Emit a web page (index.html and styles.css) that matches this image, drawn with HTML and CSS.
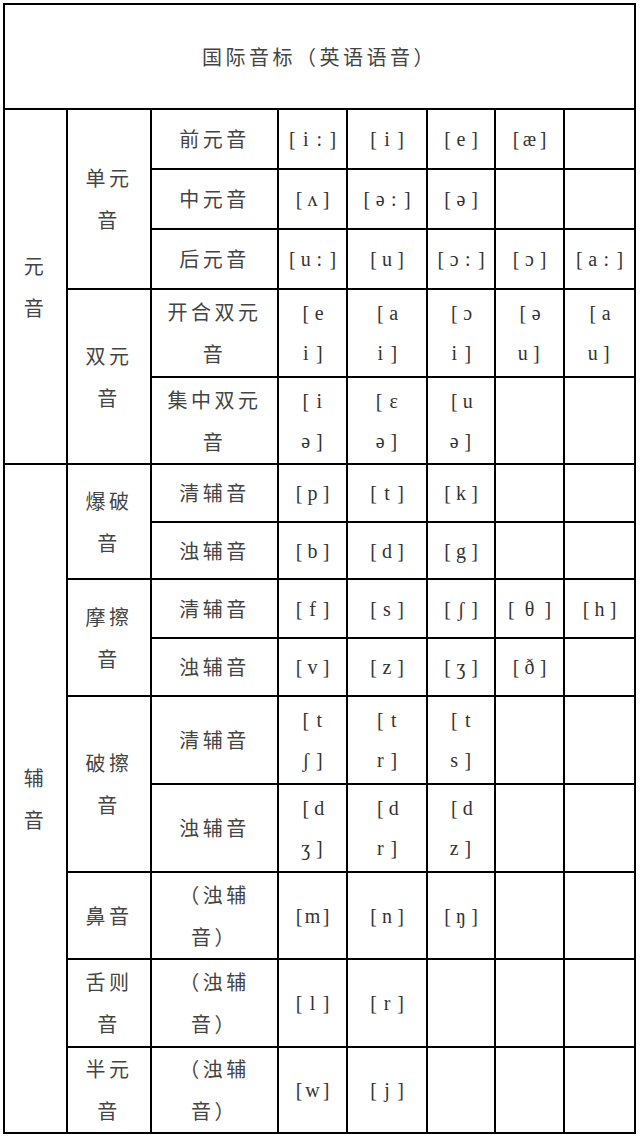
FILE: index.html
```html
<!DOCTYPE html>
<html lang="zh-CN">
<head>
<meta charset="utf-8">
<title>国际音标（英语语音）</title>
<link rel="stylesheet" href="styles.css">
</head>
<body>
<table class="ipa">
  <colgroup>
    <col class="c1"><col class="c2"><col class="c3"><col class="c4"><col class="c5"><col class="c6"><col class="c7"><col class="c8">
  </colgroup>
  <tbody>
    <tr class="r-title"><td colspan="8" class="zh">国际音标（英语语音）</td></tr>

    <tr class="r60">
      <td rowspan="5" class="zh">元<br>音</td>
      <td rowspan="3" class="zh">单元<br>音</td>
      <td class="zh">前元音</td>
      <td class="ph"><span class="g">[</span><span class="g">i</span><span class="g">:</span><span class="g">]</span></td>
      <td class="ph"><span class="g">[</span><span class="g">i</span><span class="g">]</span></td>
      <td class="ph"><span class="g">[</span><span class="g">e</span><span class="g">]</span></td>
      <td class="ph"><span class="g">[</span><span class="g">æ</span><span class="g">]</span></td>
      <td></td>
    </tr>
    <tr class="r60">
      <td class="zh">中元音</td>
      <td class="ph"><span class="g">[</span><span class="g">ʌ</span><span class="g">]</span></td>
      <td class="ph"><span class="g">[</span><span class="g">ə</span><span class="g">:</span><span class="g">]</span></td>
      <td class="ph"><span class="g">[</span><span class="g">ə</span><span class="g">]</span></td>
      <td></td><td></td>
    </tr>
    <tr class="r60">
      <td class="zh">后元音</td>
      <td class="ph"><span class="g">[</span><span class="g">u</span><span class="g">:</span><span class="g">]</span></td>
      <td class="ph"><span class="g">[</span><span class="g">u</span><span class="g">]</span></td>
      <td class="ph"><span class="g">[</span><span class="g">ɔ</span><span class="g">:</span><span class="g">]</span></td>
      <td class="ph"><span class="g">[</span><span class="g">ɔ</span><span class="g">]</span></td>
      <td class="ph"><span class="g">[</span><span class="g">a</span><span class="g">:</span><span class="g">]</span></td>
    </tr>
    <tr class="r88">
      <td rowspan="2" class="zh">双元<br>音</td>
      <td class="zh">开合双元<br>音</td>
      <td class="ph"><span class="g">[</span><span class="g">e</span><br><span class="g">i</span><span class="g">]</span></td>
      <td class="ph"><span class="g">[</span><span class="g">a</span><br><span class="g">i</span><span class="g">]</span></td>
      <td class="ph"><span class="g">[</span><span class="g">ɔ</span><br><span class="g">i</span><span class="g">]</span></td>
      <td class="ph"><span class="g">[</span><span class="g">ə</span><br><span class="g">u</span><span class="g">]</span></td>
      <td class="ph"><span class="g">[</span><span class="g">a</span><br><span class="g">u</span><span class="g">]</span></td>
    </tr>
    <tr class="r87">
      <td class="zh">集中双元<br>音</td>
      <td class="ph"><span class="g">[</span><span class="g">i</span><br><span class="g">ə</span><span class="g">]</span></td>
      <td class="ph"><span class="g">[</span><span class="g w">ε</span><br><span class="g">ə</span><span class="g">]</span></td>
      <td class="ph"><span class="g">[</span><span class="g">u</span><br><span class="g">ə</span><span class="g">]</span></td>
      <td></td><td></td>
    </tr>

    <tr class="r58">
      <td rowspan="9" class="zh">辅<br>音</td>
      <td rowspan="2" class="zh">爆破<br>音</td>
      <td class="zh">清辅音</td>
      <td class="ph"><span class="g">[</span><span class="g">p</span><span class="g">]</span></td>
      <td class="ph"><span class="g">[</span><span class="g">t</span><span class="g">]</span></td>
      <td class="ph"><span class="g">[</span><span class="g">k</span><span class="g">]</span></td>
      <td></td><td></td>
    </tr>
    <tr class="r57">
      <td class="zh">浊辅音</td>
      <td class="ph"><span class="g">[</span><span class="g">b</span><span class="g">]</span></td>
      <td class="ph"><span class="g">[</span><span class="g">d</span><span class="g">]</span></td>
      <td class="ph"><span class="g">[</span><span class="g">g</span><span class="g">]</span></td>
      <td></td><td></td>
    </tr>
    <tr class="r59">
      <td rowspan="2" class="zh">摩擦<br>音</td>
      <td class="zh">清辅音</td>
      <td class="ph"><span class="g">[</span><span class="g">f</span><span class="g">]</span></td>
      <td class="ph"><span class="g">[</span><span class="g">s</span><span class="g">]</span></td>
      <td class="ph"><span class="g">[</span><span class="g">ʃ</span><span class="g">]</span></td>
      <td class="ph"><span class="g">[</span><span class="g fw">θ</span><span class="g">]</span></td>
      <td class="ph"><span class="g">[</span><span class="g">h</span><span class="g">]</span></td>
    </tr>
    <tr class="r58">
      <td class="zh">浊辅音</td>
      <td class="ph"><span class="g">[</span><span class="g">v</span><span class="g">]</span></td>
      <td class="ph"><span class="g">[</span><span class="g">z</span><span class="g">]</span></td>
      <td class="ph"><span class="g">[</span><span class="g">ʒ</span><span class="g">]</span></td>
      <td class="ph"><span class="g">[</span><span class="g">ð</span><span class="g">]</span></td>
      <td></td>
    </tr>
    <tr class="r88">
      <td rowspan="2" class="zh">破擦<br>音</td>
      <td class="zh">清辅音</td>
      <td class="ph"><span class="g">[</span><span class="g">t</span><br><span class="g">ʃ</span><span class="g">]</span></td>
      <td class="ph"><span class="g">[</span><span class="g">t</span><br><span class="g">r</span><span class="g">]</span></td>
      <td class="ph"><span class="g">[</span><span class="g">t</span><br><span class="g">s</span><span class="g">]</span></td>
      <td></td><td></td>
    </tr>
    <tr class="r88">
      <td class="zh">浊辅音</td>
      <td class="ph"><span class="g">[</span><span class="g">d</span><br><span class="g">ʒ</span><span class="g">]</span></td>
      <td class="ph"><span class="g">[</span><span class="g">d</span><br><span class="g">r</span><span class="g">]</span></td>
      <td class="ph"><span class="g">[</span><span class="g">d</span><br><span class="g">z</span><span class="g">]</span></td>
      <td></td><td></td>
    </tr>
    <tr class="r87">
      <td class="zh">鼻音</td>
      <td class="zh">（浊辅<br>音）</td>
      <td class="ph"><span class="g">[</span><span class="g">m</span><span class="g">]</span></td>
      <td class="ph"><span class="g">[</span><span class="g">n</span><span class="g">]</span></td>
      <td class="ph"><span class="g">[</span><span class="g">ŋ</span><span class="g">]</span></td>
      <td></td><td></td>
    </tr>
    <tr class="r88">
      <td class="zh">舌则<br>音</td>
      <td class="zh">（浊辅<br>音）</td>
      <td class="ph"><span class="g">[</span><span class="g">l</span><span class="g">]</span></td>
      <td class="ph"><span class="g">[</span><span class="g">r</span><span class="g">]</span></td>
      <td></td><td></td><td></td>
    </tr>
    <tr class="r86">
      <td class="zh">半元<br>音</td>
      <td class="zh">（浊辅<br>音）</td>
      <td class="ph"><span class="g">[</span><span class="g">w</span><span class="g">]</span></td>
      <td class="ph"><span class="g">[</span><span class="g">j</span><span class="g">]</span></td>
      <td></td><td></td><td></td>
    </tr>
  </tbody>
</table>
</body>
</html>
```

FILE: styles.css
```css
html, body {
  margin: 0;
  padding: 0;
  background: #fff;
}

body {
  padding: 3px 0 0 3px;
}

.ipa {
  border-collapse: collapse;
  table-layout: fixed;
  width: 633px;
  color: #444;
}

.ipa td {
  border: 2px solid #000;
  padding: 0 6px;
  text-align: center;
  vertical-align: middle;
  overflow: hidden;
}

.c1 { width: 63px; }
.c2 { width: 84px; }
.c3 { width: 127px; }
.c4 { width: 69px; }
.c5 { width: 80px; }
.c6 { width: 68px; }
.c7 { width: 69px; }
.c8 { width: 71px; }

.r-title { height: 105px; }
.r60 { height: 60px; }
.r88 { height: 88px; }
.r87 { height: 87px; }
.r86 { height: 86px; }
.r59 { height: 59px; }
.r58 { height: 58px; }
.r57 { height: 57px; }

.zh {
  font-family: "Noto Sans CJK SC", sans-serif;
  font-size: 20px;
  letter-spacing: 3.5px;
  line-height: 42px;
  padding-left: 9px;
  padding-right: 6px;
  text-spacing-trim: space-all;
}

.ph {
  font-family: "Liberation Serif", serif;
  font-size: 20px;
  line-height: 40px;
  padding-left: 6px;
  padding-right: 4px;
  white-space: nowrap;
  color: #333;
}

.g {
  display: inline-flex;
  justify-content: center;
  width: 13.5px;
}

.g.w {
  width: 16px;
}

.g.fw {
  width: 23px;
}
```
